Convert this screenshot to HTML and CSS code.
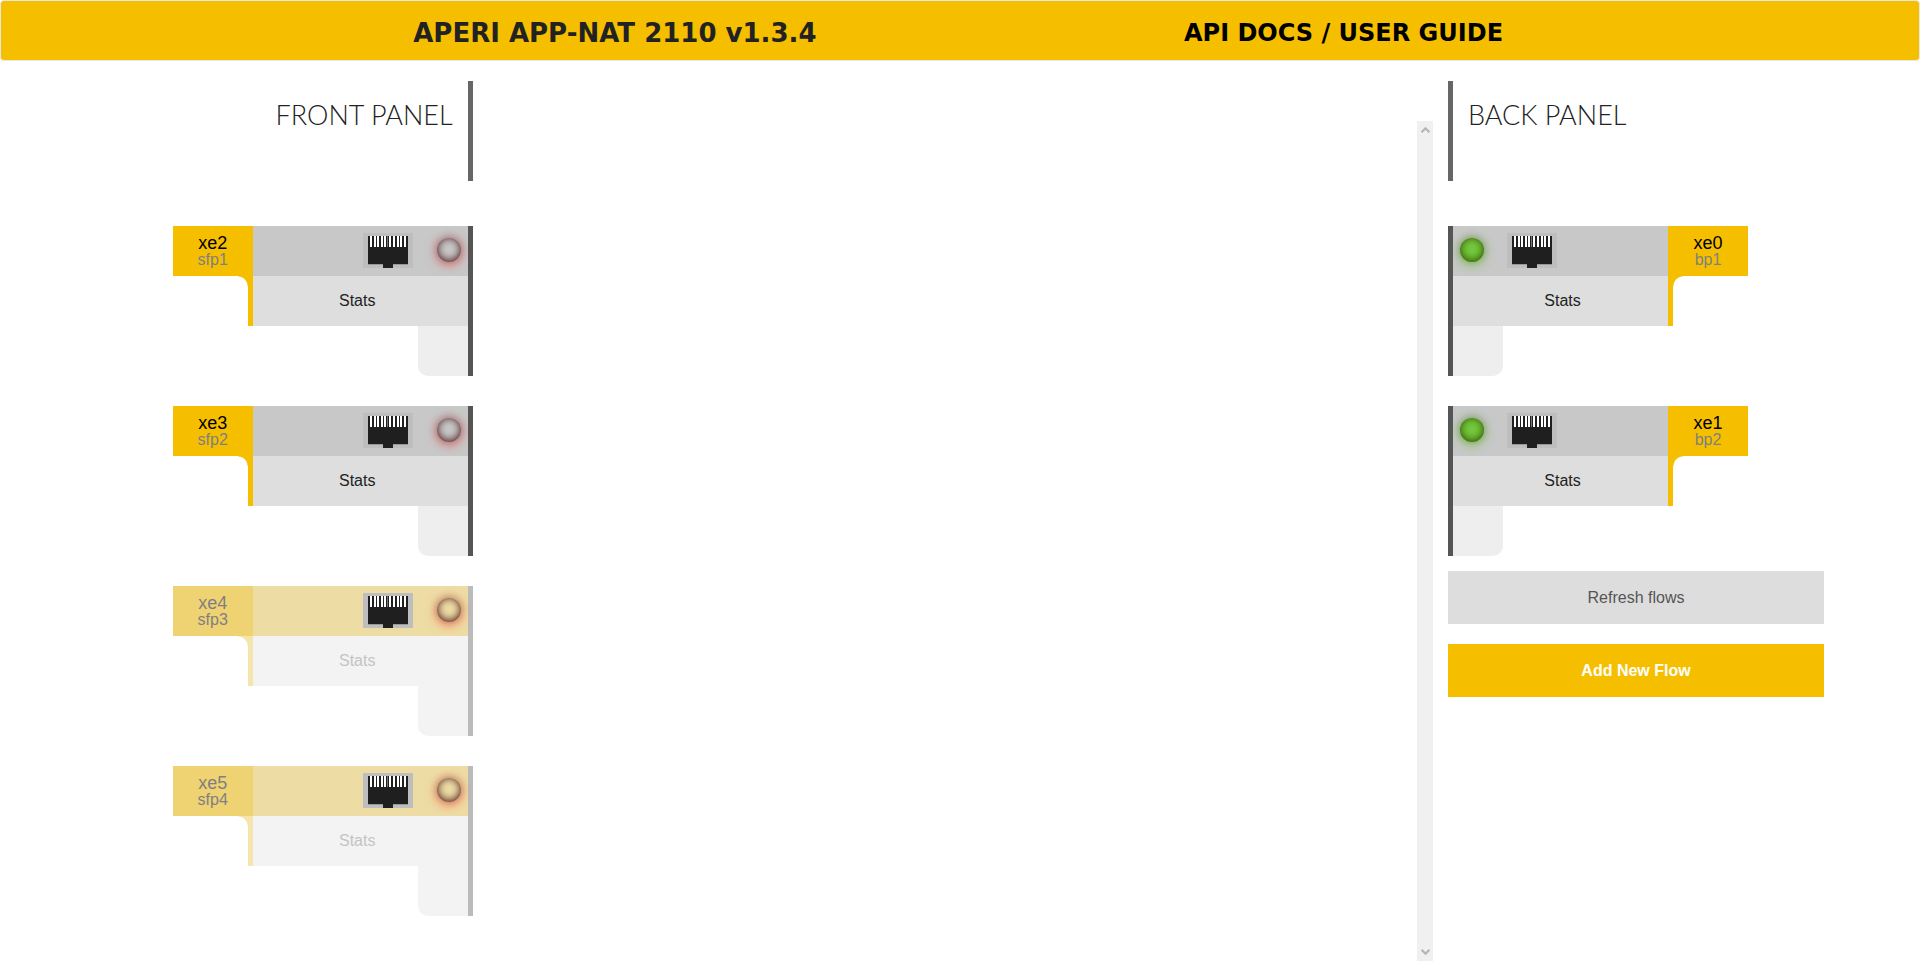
FILE: index.html
```html
<!DOCTYPE html>
<html lang="en">
<head>
<meta charset="utf-8">
<title>Aperi APP-NAT 2110</title>
<link rel="stylesheet" href="styles.css">
</head>
<body>
<svg class="defs" aria-hidden="true">
  <symbol id="jack" viewBox="0 0 50 35">
    <rect width="50" height="35" fill="#bebebe"/>
    <rect x="5" y="28" width="40" height="4" fill="#999"/>
    <rect x="5" y="3" width="40" height="28" fill="#1f1f1f"/>
    <rect x="20" y="30" width="10" height="5" fill="#1f1f1f"/>
    <path d="M8 3v11M12 3v11M15 3v11M19 3v11M22 3v11M27 3v11M31 3v11M35 3v11M38 3v11M42 3v11" stroke="#fff" stroke-width="2"/>
    <path d="M24.500 3v11" stroke="#777" stroke-width="1"/>
  </symbol>
</svg>
<header class="topbar">
  <h1 class="topbar-title">APERI APP-NAT 2110 v1.3.4</h1>
  <nav class="topbar-links"><a href="#api">API DOCS</a> / <a href="#guide">USER GUIDE</a></nav>
</header>
<main class="layout">
  <section class="panel front">
    <h2 class="panel-title">FRONT PANEL</h2>
    <article class="port">
      <div class="tab"><span class="name">xe2</span><span class="alias">sfp1</span></div>
      <div class="strip"><svg class="jack"><use href="#jack"/></svg><span class="led"></span></div>
      <div class="edge"></div>
      <button class="stats" type="button">Stats</button>
      <div class="foot"></div>
    </article>
    <article class="port">
      <div class="tab"><span class="name">xe3</span><span class="alias">sfp2</span></div>
      <div class="strip"><svg class="jack"><use href="#jack"/></svg><span class="led"></span></div>
      <div class="edge"></div>
      <button class="stats" type="button">Stats</button>
      <div class="foot"></div>
    </article>
    <article class="port off">
      <div class="tab"><span class="name">xe4</span><span class="alias">sfp3</span></div>
      <div class="strip"><svg class="jack"><use href="#jack"/></svg><span class="led"></span></div>
      <div class="edge"></div>
      <button class="stats" type="button">Stats</button>
      <div class="foot"></div>
    </article>
    <article class="port off">
      <div class="tab"><span class="name">xe5</span><span class="alias">sfp4</span></div>
      <div class="strip"><svg class="jack"><use href="#jack"/></svg><span class="led"></span></div>
      <div class="edge"></div>
      <button class="stats" type="button">Stats</button>
      <div class="foot"></div>
    </article>
  </section>
  <section class="flows" aria-label="Flows">
    <div class="scrollbar">
      <svg class="arrow" viewBox="0 0 8 7"><path d="M0.500 5.500L4 2L7.500 5.500"/></svg>
      <svg class="arrow" viewBox="0 0 8 7"><path d="M0.500 1.500L4 5L7.500 1.500"/></svg>
    </div>
  </section>
  <section class="panel back">
    <h2 class="panel-title">BACK PANEL</h2>
    <article class="port">
      <div class="tab"><span class="name">xe0</span><span class="alias">bp1</span></div>
      <div class="strip"><svg class="jack"><use href="#jack"/></svg><span class="led up"></span></div>
      <div class="edge"></div>
      <button class="stats" type="button">Stats</button>
      <div class="foot"></div>
    </article>
    <article class="port">
      <div class="tab"><span class="name">xe1</span><span class="alias">bp2</span></div>
      <div class="strip"><svg class="jack"><use href="#jack"/></svg><span class="led up"></span></div>
      <div class="edge"></div>
      <button class="stats" type="button">Stats</button>
      <div class="foot"></div>
    </article>
    <div class="actions">
      <button class="action" type="button">Refresh flows</button>
      <button class="action primary" type="button">Add New Flow</button>
    </div>
  </section>
</main>
</body>
</html>
```

FILE: styles.css
```css
* { box-sizing: border-box; }
body {
  margin: 0;
  background: #fff;
  color: #222;
  font-family: "Liberation Sans", Arial, sans-serif;
  font-size: 16px;
}
button { border: 0; padding: 0; font: inherit; color: inherit; cursor: pointer; }
.defs { display: none; }

.topbar {
  display: grid;
  grid-template-columns: 1fr 1fr;
  align-items: center;
  min-height: 61px;
  padding: 5px 11% 0 13%;
  border: 1px solid #e7e7e7;
  border-radius: 4px;
  background: #f5bf00;
  font-family: "DejaVu Sans", sans-serif;
  font-weight: 700;
}
.topbar-title { margin: 0; font-size: 26px; line-height: 32px; text-align: center; white-space: nowrap; }
.topbar-links { font-size: 24px; line-height: 32px; color: #000; text-align: center; white-space: nowrap; }
.topbar-links a { color: inherit; text-decoration: none; }

.layout {
  display: grid;
  grid-template-columns: 21.8% minmax(0, 1fr) 21.76%;
  column-gap: 15px;
  padding: 20px 5% 0;
}
.panel { display: flex; flex-direction: column; }
.panel-title {
  height: 100px;
  margin: 0 0 45px;
  padding: 14px 15px 0;
  border: 0 solid #666;
  font-family: "Liberation Sans Narrow", Lato, sans-serif;
  font-size: 27px;
  line-height: 40px;
  font-weight: 300;
}
.front { align-items: flex-end; }
.front .panel-title { border-right-width: 5px; }
.back { align-items: flex-start; }
.back .panel-title { border-left-width: 5px; }

.port {
  display: grid;
  grid-template-columns: 80px 215px;
  grid-template-rows: 50px 50px 50px;
  grid-template-areas: "tab strip" "edge stats" ". foot";
  margin-bottom: 30px;
  border: 0 solid #555;
}
.front .port { border-right-width: 5px; }
.back .port {
  grid-template-columns: 215px 80px;
  grid-template-areas: "strip tab" "stats edge" "foot .";
  border-left-width: 5px;
}
.tab {
  grid-area: tab;
  display: flex;
  flex-direction: column;
  align-items: center;
  padding-top: 9px;
  background: #f5bf00;
}
.name { color: #000; font-size: 18px; line-height: 17px; }
.alias { color: #808080; font-size: 16px; line-height: 16px; }
.strip {
  grid-area: strip;
  display: flex;
  align-items: flex-start;
  justify-content: flex-end;
  gap: 24px;
  padding: 7px 7px 0;
  background: #c8c8c8;
}
.back .strip { flex-direction: row-reverse; gap: 23px; }
.jack { width: 50px; height: 35px; }
.led {
  width: 24px;
  height: 24px;
  margin-top: 5px;
  border-radius: 50%;
  box-shadow: rgba(0, 0, 0, .2) 0 -1px 7px 1px, inset #441313 0 -1px 9px, rgba(255, 0, 0, .5) 0 2px 12px;
}
.led.up {
  background: #73c93c;
  box-shadow: rgba(0, 0, 0, .2) 0 -1px 7px 1px, inset #304701 0 -1px 9px, rgba(90, 200, 20, .7) 0 2px 12px;
}
.edge {
  grid-area: edge;
  background: radial-gradient(circle at 0 100%, #fff 9px, #f5bf00 10px) right 5px top / 10px 10px no-repeat,
    linear-gradient(#f5bf00, #f5bf00) right / 5px 100% no-repeat;
}
.back .edge {
  background: radial-gradient(circle at 100% 100%, #fff 9px, #f5bf00 10px) left 5px top / 10px 10px no-repeat,
    linear-gradient(#f5bf00, #f5bf00) left / 5px 100% no-repeat;
}
.stats { grid-area: stats; background: #dedede; }
.back .stats { padding-left: 4px; }
.front .stats { padding-right: 6px; }
.foot { grid-area: foot; width: 50px; background: #eee; }
.front .foot { justify-self: end; border-bottom-left-radius: 10px; }
.back .foot { border-bottom-right-radius: 10px; }

.off { border-color: #bbb; }
.off .tab { background: #efd373; }
.off .name, .off .alias { color: #808080; }
.off .strip { background: #eedca5; }
.off .edge {
  background: radial-gradient(circle at 0 100%, #fff 9px, #f6e4ad 10px) right 5px top / 10px 10px no-repeat,
    linear-gradient(#f6e4ad, #f6e4ad) right / 5px 100% no-repeat;
}
.off .stats { background: #f3f3f3; color: #c4c4c4; }
.off .foot { background: #f3f3f3; }

.flows {
  display: flex;
  justify-content: flex-end;
  height: calc(100vh - 131px);
  margin-top: 40px;
}
.scrollbar {
  display: flex;
  flex-direction: column;
  justify-content: space-between;
  align-items: center;
  width: 16px;
  padding: 5px 0;
  background: #f0f0f0;
}
.arrow { width: 9px; height: 8px; fill: none; stroke: #b4b4b4; stroke-width: 2; }

.actions { display: flex; flex-direction: column; gap: 20px; align-self: stretch; margin-top: -15px; }
.action { height: 53px; background: #ddd; color: #555; }
.action.primary { background: #f5bf00; color: #fff; font-weight: 700; }
```
